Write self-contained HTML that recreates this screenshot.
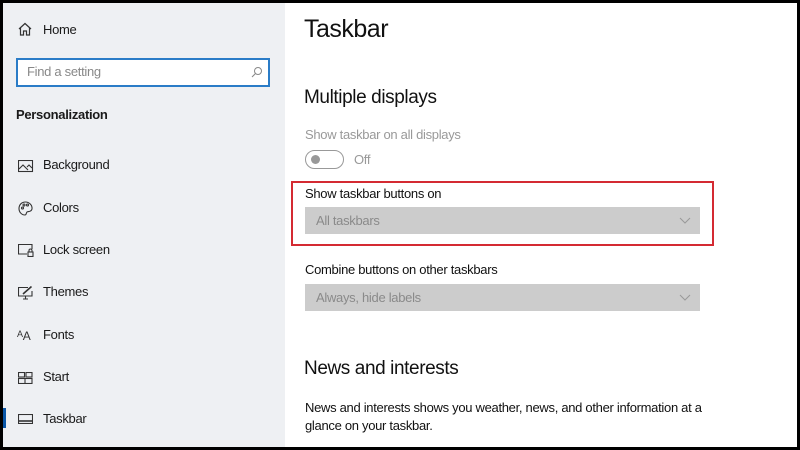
<!DOCTYPE html>
<html><head><meta charset="utf-8"><style>
*{margin:0;padding:0;box-sizing:border-box}
body{width:800px;height:450px;background:#000;position:relative;overflow:hidden;font-family:"Liberation Sans",sans-serif;letter-spacing:-0.3px}
#side{position:absolute;left:3px;top:3px;width:282px;height:444px;background:#eef0f3}
#main{position:absolute;left:285px;top:3px;width:512px;height:444px;background:#fff}
.t{position:absolute;white-space:nowrap}
.ic{position:absolute;left:15px}
.nav{position:absolute;left:40px;font-size:13px;color:#1a1a1a}
.dd{position:absolute;left:20px;width:395px;height:27px;background:#cccccc;color:#8a8a8a;font-size:13px;line-height:27px;padding-left:11px}
.dd svg{position:absolute;right:9px;top:10px}
.h{letter-spacing:-0.4px}
</style></head><body>
<div id="side">
<svg class="ic" style="top:19px" width="14" height="14" viewBox="0 0 14 14" fill="none" stroke="#333" stroke-width="1.2"><path d="M1 7L7 1.5 13 7M2.5 5.8V13H5.5V9H8.5V13H11.5V5.8"/></svg>
<div class="nav" style="top:19px">Home</div>
<div style="position:absolute;left:13px;top:55px;width:254px;height:29px;border:2px solid #2a7cc7;background:#fff"></div>
<div class="t" style="left:24px;top:61px;font-size:13px;color:#888">Find a setting</div>
<svg style="position:absolute;left:248px;top:63px" width="12" height="12" viewBox="0 0 12 12" fill="none" stroke="#888" stroke-width="1"><circle cx="7" cy="5" r="3.5"/><path d="M4.5 7.5L1 11"/></svg>
<div class="t" style="left:13px;top:104px;font-size:13px;font-weight:bold;color:#1a1a1a">Personalization</div>

<svg class="ic" style="top:157px" width="16" height="13" viewBox="0 0 16 13" fill="none" stroke="#333" stroke-width="1.1"><rect x="0.5" y="0.5" width="14" height="11"/><path d="M1 9L5 5 10 10M9 7L11 5 14 8"/></svg>
<div class="nav" style="top:154px">Background</div>
<svg class="ic" style="top:198px" width="15" height="15" viewBox="0 0 15 15" fill="none" stroke="#333" stroke-width="1.1"><path d="M7.5 1C3.5 1 1 4 1 7.5S3.5 14 7 14C8.5 14 8 12 9 11S13 11.5 14 8C14.5 4 11 1 7.5 1Z"/><circle cx="4.5" cy="7" r="1"/><circle cx="6" cy="4" r="1"/><circle cx="9.5" cy="4" r="1"/></svg>
<div class="nav" style="top:197px">Colors</div>
<svg class="ic" style="top:241px" width="16" height="13" viewBox="0 0 16 13" fill="none" stroke="#333" stroke-width="1.1"><path d="M9 10H0.5V0.5H14V5"/><rect x="10" y="8" width="5" height="4.5"/><path d="M11 8V6.5a1.5 1.5 0 0 1 3 0V8"/></svg>
<div class="nav" style="top:239px">Lock screen</div>
<svg class="ic" style="top:283px" width="15" height="14" viewBox="0 0 15 14" fill="none" stroke="#333" stroke-width="1.1"><path d="M10 1.5H0.5V10H14V5M5 13H10M7.5 10V13"/><path d="M5 8L13.5 0.5" stroke-width="1.6"/></svg>
<div class="nav" style="top:281px">Themes</div>
<div class="t" style="left:14px;top:326px;font-size:9px;color:#333"><span style="position:relative;top:-3px">A</span><span style="font-size:12px">A</span></div>
<div class="nav" style="top:324px">Fonts</div>
<svg class="ic" style="top:369px" width="15" height="12" viewBox="0 0 15 12" fill="none" stroke="#333" stroke-width="1.1"><rect x="0.5" y="0.5" width="6" height="4.5"/><rect x="8" y="0.5" width="6" height="4.5"/><rect x="0.5" y="6.5" width="13.5" height="5"/><path d="M7 6.5V11.5"/></svg>
<div class="nav" style="top:366px">Start</div>
<div style="position:absolute;left:0;top:405px;width:3px;height:20px;background:#0a57a8"></div>
<svg class="ic" style="top:411px" width="15" height="10" viewBox="0 0 15 10" fill="none" stroke="#333" stroke-width="1.1"><rect x="0.5" y="0.5" width="14" height="9"/><path d="M1 7H14" stroke-width="1.6"/></svg>
<div class="nav" style="top:408px">Taskbar</div>
</div>

<div id="main">
<div class="t" style="left:19px;top:12px;font-size:25px;color:#111;letter-spacing:-0.5px">Taskbar</div>
<div class="t h" style="left:19px;top:84px;font-size:19px;color:#111">Multiple displays</div>
<div class="t" style="left:20px;top:124px;font-size:13px;color:#999">Show taskbar on all displays</div>
<div style="position:absolute;left:20px;top:147px;width:39px;height:19px;border:1.5px solid #999;border-radius:10px"></div>
<div style="position:absolute;left:26px;top:152px;width:9px;height:9px;border-radius:50%;background:#999"></div>
<div class="t" style="left:69px;top:149px;font-size:13px;color:#999">Off</div>
<div style="position:absolute;left:6px;top:178px;width:423px;height:65px;border:2.5px solid #d42a32"></div>
<div class="t" style="left:20px;top:183px;font-size:13px;color:#111">Show taskbar buttons on</div>
<div class="dd" style="top:204px">All taskbars<svg width="12" height="7" viewBox="0 0 12 7" fill="none" stroke="#999"><path d="M1 1L6 6 11 1"/></svg></div>
<div class="t" style="left:20px;top:259px;font-size:13px;color:#111">Combine buttons on other taskbars</div>
<div class="dd" style="top:281px">Always, hide labels<svg width="12" height="7" viewBox="0 0 12 7" fill="none" stroke="#999"><path d="M1 1L6 6 11 1"/></svg></div>
<div class="t h" style="left:19px;top:355px;font-size:19px;color:#111">News and interests</div>
<div class="t" style="left:20px;top:396px;font-size:13px;color:#111;line-height:18px">News and interests shows you weather, news, and other information at a<br>glance on your taskbar.</div>
</div>
</body></html>
